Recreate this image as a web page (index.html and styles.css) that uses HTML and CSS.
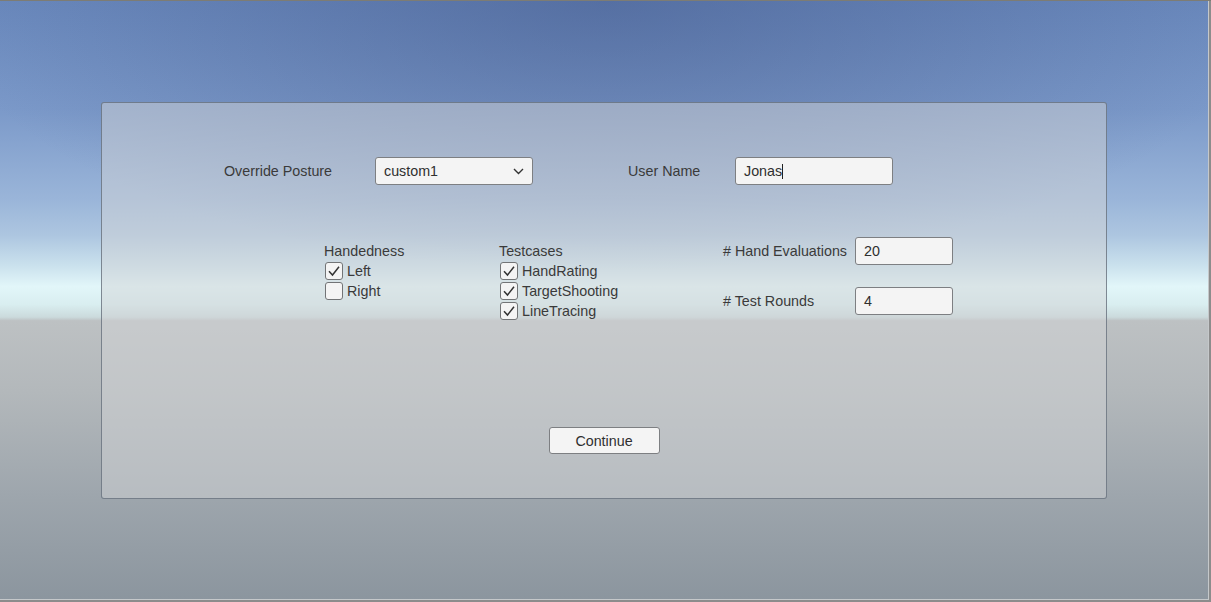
FILE: index.html
```html
<!DOCTYPE html>
<html>
<head>
<meta charset="utf-8">
<link rel="stylesheet" href="styles.css">
</head>
<body>
<div class="screen">
  <div class="panel">
    <div class="row-top">
      <span class="lbl lbl-posture">Override Posture</span>
      <div class="field select">
        <span>custom1</span>
        <svg class="chev" width="11" height="7" viewBox="0 0 11 7"><path d="M1 1 L5.5 5.5 L10 1" fill="none" stroke="#333" stroke-width="1.4"/></svg>
      </div>
      <span class="lbl lbl-user">User Name</span>
      <div class="field input"><span>Jonas</span><span class="caret"></span></div>
    </div>
    <div class="row-mid">
      <div class="col col-hand">
        <div class="col-title">Handedness</div>
        <div class="check-row"><span class="box"><svg width="16" height="16" viewBox="0 0 16 16"><path d="M3 8.2 L6.5 12 L13 3.8" fill="none" stroke="#333" stroke-width="1.5"/></svg></span><span class="lbl">Left</span></div>
        <div class="check-row"><span class="box"></span><span class="lbl">Right</span></div>
      </div>
      <div class="col col-test">
        <div class="col-title">Testcases</div>
        <div class="check-row"><span class="box"><svg width="16" height="16" viewBox="0 0 16 16"><path d="M3 8.2 L6.5 12 L13 3.8" fill="none" stroke="#333" stroke-width="1.5"/></svg></span><span class="lbl">HandRating</span></div>
        <div class="check-row"><span class="box"><svg width="16" height="16" viewBox="0 0 16 16"><path d="M3 8.2 L6.5 12 L13 3.8" fill="none" stroke="#333" stroke-width="1.5"/></svg></span><span class="lbl">TargetShooting</span></div>
        <div class="check-row"><span class="box"><svg width="16" height="16" viewBox="0 0 16 16"><path d="M3 8.2 L6.5 12 L13 3.8" fill="none" stroke="#333" stroke-width="1.5"/></svg></span><span class="lbl">LineTracing</span></div>
      </div>
      <div class="col col-num">
        <div class="num-row"><span class="lbl num-lbl"># Hand Evaluations</span><div class="field num"><span>20</span></div></div>
        <div class="num-row"><span class="lbl num-lbl"># Test Rounds</span><div class="field num"><span>4</span></div></div>
      </div>
    </div>
    <div class="btn-wrap"><div class="btn">Continue</div></div>
  </div>
</div>
</body>
</html>
```
FILE: styles.css
```css
html, body {
  margin: 0;
  padding: 0;
}
body {
  font-family: "Liberation Sans", Arial, sans-serif;
  font-size: 14.3px;
  color: #3a3a3a;
}
.screen {
  width: 1211px;
  height: 602px;
  box-sizing: border-box;
  padding: 101px 0 0 101px;
  overflow: hidden;
  border-top: 1px solid #7d7c74;
  background:
    radial-gradient(ellipse 55% 45% at 50% 0%, rgba(60, 80, 130, 0.45), rgba(60, 80, 130, 0) 100%),
    linear-gradient(to bottom,
      #6a89bd 0%,
      #7b99c9 18%,
      #9ab5d9 33%,
      #adc6e0 39%,
      #cae1ed 44%,
      #e2f6f9 47.5%,
      #d9eef0 50.5%,
      #cbdadc 52.6%,
      #bdc1c3 53.2%,
      #b3b8bb 65%,
      #9ea6ad 82%,
      #8b959e 100%);
  box-shadow: inset -2px -2px 0 #8c8c8c, inset -3px -3px 0 #c5c8ca;
}
.panel {
  width: 1006px;
  height: 397px;
  box-sizing: border-box;
  border: 1px solid rgba(95, 105, 118, 0.75);
  border-radius: 3px;
  background: rgba(210, 212, 214, 0.5);
  padding-top: 54px;
}
.lbl {
  white-space: nowrap;
}
.row-top {
  display: flex;
  align-items: center;
  height: 28px;
  padding-left: 122px;
}
.lbl-posture {
  width: 151px;
}
.lbl-user {
  margin-left: 95px;
  width: 107px;
}
.field {
  box-sizing: border-box;
  height: 28px;
  background: #f4f4f4;
  border: 1px solid #7d7f82;
  border-radius: 3px;
  display: flex;
  align-items: center;
  padding-left: 8px;
  color: #2f2f2f;
}
.select {
  width: 158px;
  justify-content: space-between;
  padding-right: 8px;
}
.chev {
  display: block;
}
.input {
  width: 158px;
}
.caret {
  display: inline-block;
  width: 1px;
  height: 15px;
  background: #222;
}
.row-mid {
  display: flex;
  align-items: flex-start;
  margin-top: 52px;
  padding-left: 222px;
}
.col-hand {
  width: 175px;
  margin-top: 4px;
}
.col-test {
  width: 224px;
  margin-top: 4px;
}
.col-title {
  height: 20px;
  line-height: 20px;
}
.check-row {
  display: flex;
  align-items: center;
  height: 20px;
}
.box {
  box-sizing: border-box;
  width: 18px;
  height: 18px;
  margin-left: 1px;
  margin-right: 4px;
  background: #f4f4f4;
  border: 1px solid #727476;
  border-radius: 3px;
  display: flex;
  align-items: center;
  justify-content: center;
}
.box svg {
  display: block;
}
.col-num {
  display: flex;
  flex-direction: column;
  gap: 22px;
}
.num-row {
  display: flex;
  align-items: center;
  height: 28px;
}
.num-lbl {
  width: 132px;
}
.num {
  width: 98px;
}
.btn-wrap {
  display: flex;
  justify-content: center;
  margin-top: 106px;
}
.btn {
  box-sizing: border-box;
  width: 111px;
  height: 27px;
  background: #f4f4f4;
  border: 1px solid #7d7f82;
  border-radius: 3px;
  display: flex;
  align-items: center;
  justify-content: center;
  color: #2f2f2f;
}
```
